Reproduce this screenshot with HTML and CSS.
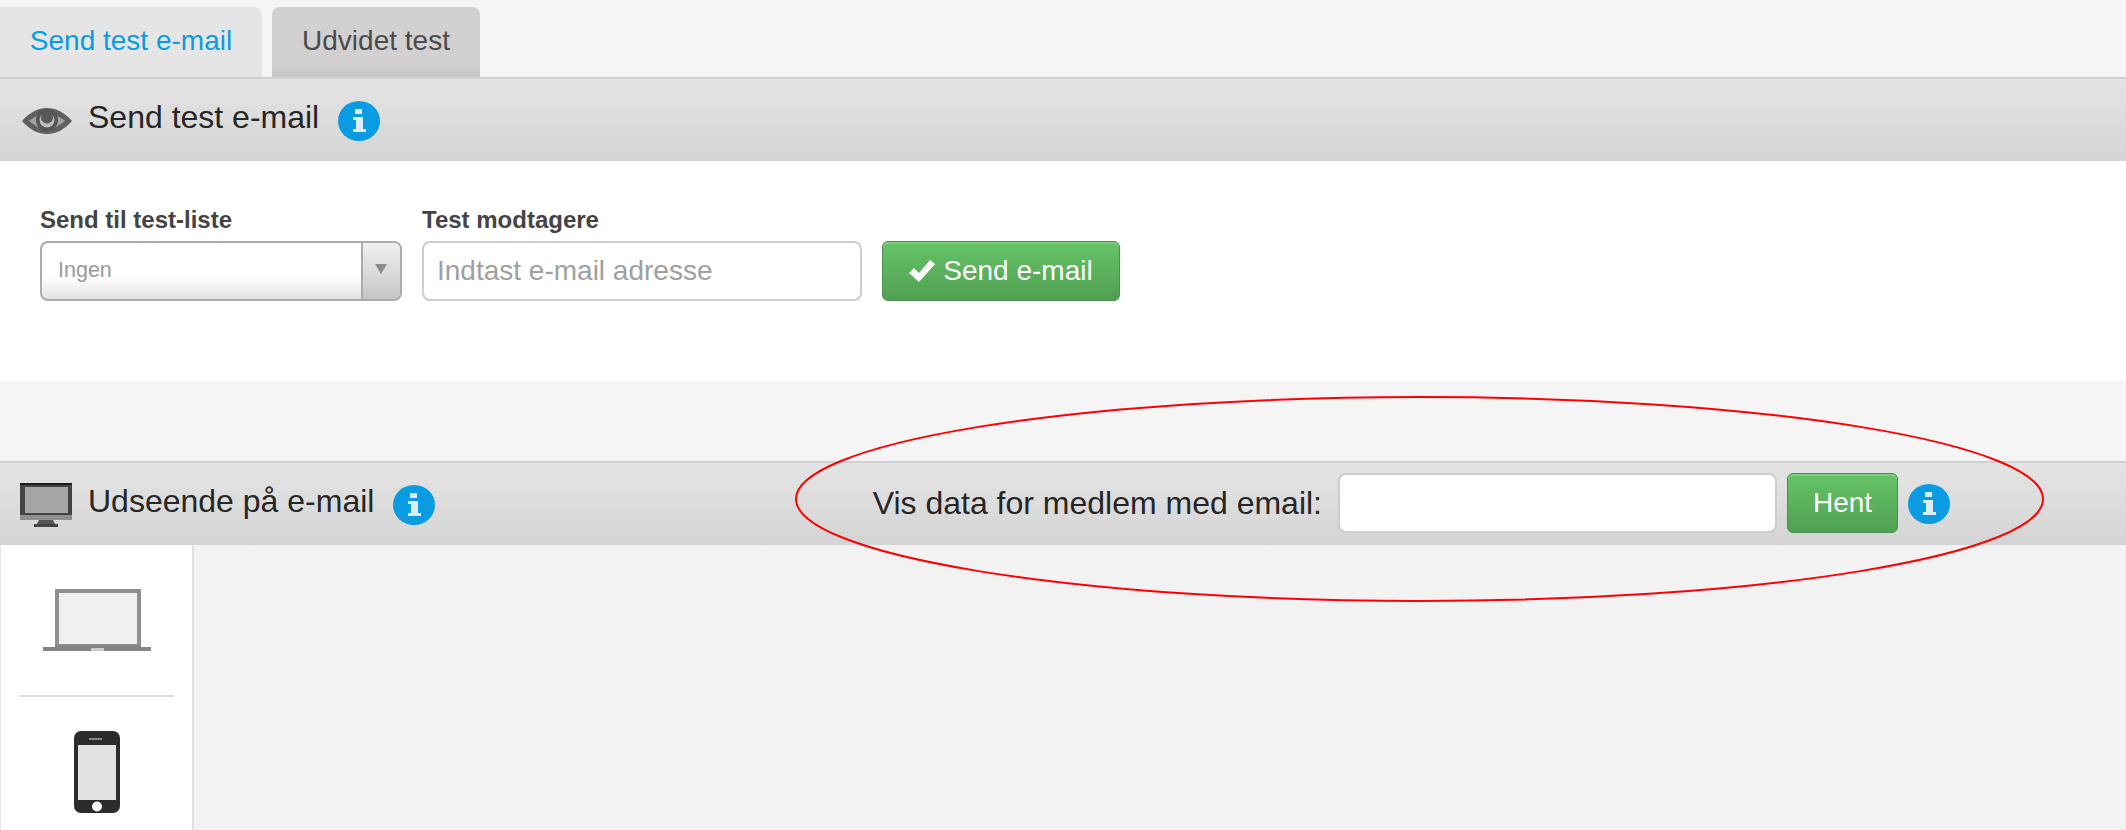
FILE: index.html
```html
<!DOCTYPE html>
<html lang="en">

<head>
    <meta charset="UTF-8">
    <title>Send test e-mail</title>
    <link rel="stylesheet" href="styles.css">
</head>

<body>
    <div class="tabs">
        <a class="tab tab--active">Send test e-mail</a>
        <a class="tab">Udvidet test</a>
    </div>

    <div class="panel-head">
        <svg class="head-icon head-icon--eye" viewBox="0 0 50 26">
            <path d="M0 13C8 4 16 0 25 0s17 4 25 13c-8 9-16 13-25 13S8 22 0 13z" fill="#5f5f5f"/>
            <path d="M7 13c6-5 12-7 18-7s12 2 18 7c-6 5-12 8-18 8S13 18 7 13z" fill="#a3a3a3"/>
            <circle cx="25" cy="12" r="11" fill="#555"/>
            <circle cx="25" cy="12" r="7.500" fill="#bcbcbc"/>
            <circle cx="25" cy="9.500" r="6" fill="#585858"/>
        </svg>
        <h2 class="panel-title">Send test e-mail</h2>
        <svg class="info" viewBox="0 0 42 40"><use href="#info-glyph"/></svg>
    </div>

    <div class="panel-body">
        <div class="field">
            <label class="field-label">Send til test-liste</label>
            <div class="select">
                <span class="select-value">Ingen</span>
                <span class="select-arrow"></span>
            </div>
        </div>
        <div class="field">
            <label class="field-label">Test modtagere</label>
            <input class="text-input text-input--wide" type="text" placeholder="Indtast e-mail adresse">
        </div>
        <button class="btn btn--send">
            <svg class="btn-check" viewBox="0 0 26 22"><path d="M0 13l5-5 5 5L21 0l5 4L10 22z" fill="#fff"/></svg>
            Send e-mail
        </button>
    </div>

    <div class="panel-gap"></div>

    <div class="panel-head">
        <svg class="head-icon head-icon--screen" viewBox="0 0 52 45">
            <rect x="0" y="0" width="52" height="33" fill="#444"/>
            <rect x="0" y="0" width="52" height="2" fill="#1c1c1c"/>
            <rect x="5" y="4" width="43" height="26" fill="#a6a6a6"/>
            <rect x="0" y="32" width="52" height="5" fill="#8f8f8f"/>
            <path d="M19 37h14l2 4H17z" fill="#555"/>
            <rect x="14" y="41" width="24" height="3" fill="#444"/>
        </svg>
        <h2 class="panel-title">Udseende på e-mail</h2>
        <svg class="info" viewBox="0 0 42 40"><use href="#info-glyph"/></svg>
        <div class="lookup">
            <label class="lookup-label">Vis data for medlem med email:</label>
            <input class="text-input text-input--lookup" type="text">
            <button class="btn btn--fetch">Hent</button>
            <svg class="info info--lookup" viewBox="0 0 42 40"><use href="#info-glyph"/></svg>
        </div>
    </div>

    <div class="preview">
        <div class="devices">
            <div class="device device--laptop">
                <svg class="laptop" viewBox="0 0 108 62">
                    <rect x="14" y="2" width="82" height="55" fill="#f0f0f0" stroke="#8f8f8f" stroke-width="4"/>
                    <rect x="0" y="58" width="108" height="4" fill="#858585"/>
                    <rect x="12" y="56" width="86" height="6" fill="#858585"/>
                    <rect x="48" y="59" width="13" height="3" fill="#cccccc"/>
                </svg>
            </div>
            <div class="device">
                <svg class="phone" viewBox="0 0 46 82">
                    <rect x="0" y="0" width="46" height="82" rx="7" fill="#2c2c2c"/>
                    <rect x="4" y="14" width="38" height="55" fill="#e2e2e2"/>
                    <rect x="15" y="7" width="13" height="2" fill="#8a8a8a"/>
                    <circle cx="23" cy="75.500" r="5" fill="#fff"/>
                </svg>
            </div>
        </div>
        <div class="canvas"></div>
    </div>

    <!-- hand drawn marking on top of the screenshot -->
    <svg class="marking" viewBox="0 0 1251 208">
        <ellipse cx="625.500" cy="104" rx="623.500" ry="102" fill="none" stroke="#f00" stroke-width="2"/>
    </svg>

    <svg class="defs" width="0" height="0">
        <symbol id="info-glyph" viewBox="0 0 42 40">
            <ellipse cx="21" cy="20" rx="21" ry="20" fill="#0a9be2"/>
            <rect x="17" y="8" width="7" height="5" fill="#dcedf6"/>
            <path d="M15 16h10v12h3v3H15v-3h3v-9h-3z" fill="#dcedf6"/>
        </symbol>
    </svg>
</body>

</html>
```
FILE: styles.css
```css
:root {
    --background: #F5F5F5;
    --canvas: #F2F2F2;
    --text: #262626;
    --blue: #0A9BE2;
}

* {
    box-sizing: border-box;
}

html,
body {
    height: 100%;
    overflow: hidden;
}

body {
    font-family: 'Liberation Sans', Arial, sans-serif;
    margin: 0px;
    position: relative;
    display: flex;
    flex-direction: column;
    background-color: var(--background);
    color: var(--text);
}

.tabs {
    display: flex;
    gap: 10px;
    height: 77px;
    padding-top: 7px;
    flex-shrink: 0;
}

.tab {
    display: flex;
    align-items: center;
    justify-content: center;
    padding-bottom: 3px;
    width: 208px;
    font-size: 28px;
    color: #4a4a4a;
    border-radius: 8px 8px 0px 0px;
    background: linear-gradient(#D2D0D1 0%, #D2D0D1 78%, #C6C6C6 100%);
}

.tab--active {
    width: 262px;
    color: var(--blue);
    background: #E5E5E5;
    border-top-left-radius: 0px;
}

.panel-head {
    display: flex;
    align-items: center;
    height: 84px;
    flex-shrink: 0;
    border-top: 2px solid #D0D0D0;
    background: linear-gradient(#E4E4E4, #D4D4D4);
}

.head-icon {
    flex-shrink: 0;
}

.head-icon--eye {
    width: 50px;
    height: 26px;
    margin-left: 22px;
    margin-right: 16px;
    margin-top: 2px;
}

.head-icon--screen {
    width: 52px;
    height: 45px;
    margin-left: 20px;
    margin-right: 16px;
    margin-top: 2px;
}

.panel-title {
    margin: 0px;
    font-size: 32px;
    font-weight: 400;
    white-space: nowrap;
    margin-top: -6px;
}

.info {
    width: 42px;
    height: 40px;
    margin-left: 19px;
    margin-top: 2px;
    flex-shrink: 0;
}

.panel-body {
    display: flex;
    align-items: flex-end;
    gap: 20px;
    height: 220px;
    flex-shrink: 0;
    padding: 0px 40px 80px;
    background-color: #FFFFFF;
}

.panel-gap {
    height: 80px;
    flex-shrink: 0;
}

.field {
    display: flex;
    flex-direction: column;
    gap: 7px;
}

.field-label {
    font-size: 24px;
    font-weight: 700;
    color: #444444;
}

.select {
    display: flex;
    width: 362px;
    height: 60px;
    border: 2px solid #ABABAB;
    border-radius: 8px;
    overflow: hidden;
    background: linear-gradient(#FFFFFF 60%, #E2E2E2 100%);
}

.select-value {
    flex: 1;
    display: flex;
    align-items: center;
    padding-left: 16px;
    padding-bottom: 2px;
    font-size: 21.5px;
    color: #9a9a9a;
}

.select-arrow {
    position: relative;
    width: 39px;
    border-left: 2px solid #ABABAB;
    background: linear-gradient(#F0F0F0, #C6C6C6);
}

.select-arrow::after {
    content: '';
    position: absolute;
    top: 21px;
    left: 12px;
    border-left: 6px solid transparent;
    border-right: 6px solid transparent;
    border-top: 10px solid #8a8a8a;
}

.text-input {
    height: 60px;
    border: 2px solid #CDCDCD;
    border-radius: 8px;
    background-color: #FFFFFF;
    font-family: inherit;
    outline: none;
}

.text-input::placeholder {
    color: #a0a0a0;
    opacity: 1;
}

.text-input--wide {
    width: 440px;
    padding: 0px 13px;
    font-size: 28px;
}

.text-input--lookup {
    width: 439px;
}

.btn {
    display: flex;
    align-items: center;
    justify-content: center;
    height: 60px;
    padding: 0px;
    border: 1px solid #4A8F4C;
    border-radius: 6px;
    font-family: inherit;
    font-size: 28px;
    color: #FFFFFF;
    background: linear-gradient(#66C367, #50A052);
    box-shadow: inset 0px 2px 0px #7CCF7D;
}

.btn--send {
    gap: 8px;
    width: 238px;
}

.btn-check {
    width: 26px;
    height: 22px;
}

.btn--fetch {
    width: 111px;
    margin-left: 10px;
}

.lookup {
    display: flex;
    align-items: center;
    margin-left: auto;
    margin-right: 176px;
    margin-top: -2px;
}

.lookup-label {
    font-size: 32px;
    white-space: nowrap;
    margin-right: 16px;
}

.info--lookup {
    margin-left: 10px;
}

.preview {
    display: flex;
    flex: 1;
    min-height: 0;
}

.devices {
    display: flex;
    flex-direction: column;
    width: 194px;
    padding: 0px 18px 0px 19px;
    border-left: 1px solid #E6E6E6;
    border-right: 2px solid #E0E0E0;
    background-color: #FFFFFF;
    flex-shrink: 0;
}

.device {
    display: flex;
    justify-content: center;
    padding-top: 34px;
}

.device--laptop {
    height: 152px;
    padding-top: 44px;
    border-bottom: 2px solid #DCDCDC;
}

.laptop {
    width: 108px;
    height: 62px;
}

.phone {
    width: 46px;
    height: 82px;
}

.canvas {
    flex: 1;
    background-color: var(--canvas);
}

.marking {
    position: absolute;
    top: 395px;
    left: 794px;
    width: 1251px;
    height: 208px;
    pointer-events: none;
}

.defs {
    position: absolute;
}
```
